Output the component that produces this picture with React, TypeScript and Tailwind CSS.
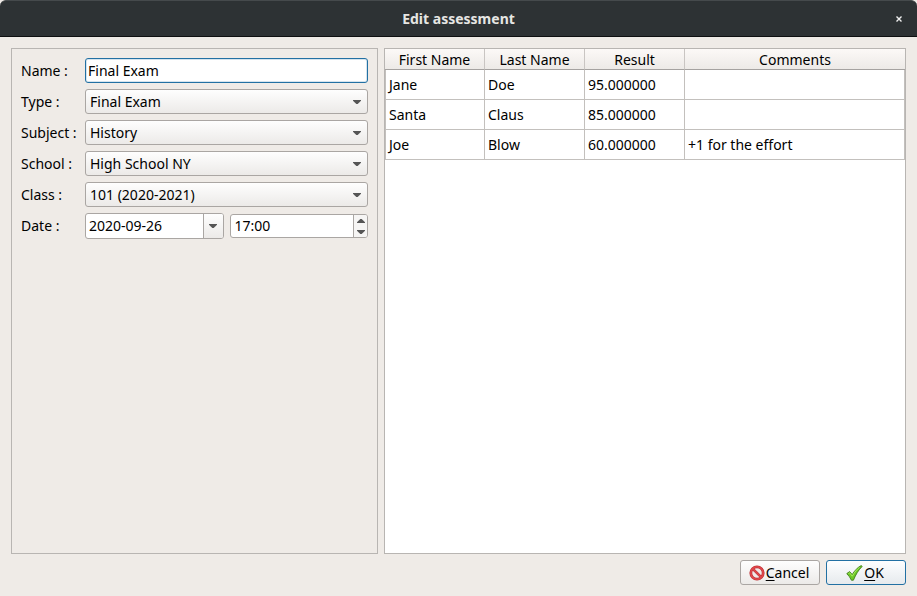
import { useState } from "react";
import type { ReactNode } from "react";

const results = [
  { first: "Jane", last: "Doe", result: "95.000000", comment: "" },
  { first: "Santa", last: "Claus", result: "85.000000", comment: "" },
  { first: "Joe", last: "Blow", result: "60.000000", comment: "+1 for the effort" },
];

const selects = [
  { id: "type", label: "Type :", options: ["Final Exam"] },
  { id: "subject", label: "Subject :", options: ["History"] },
  { id: "school", label: "School :", options: ["High School NY"] },
  { id: "class", label: "Class :", options: ["101 (2020-2021)"] },
];

function Arrow({ up = false, className = "" }: { up?: boolean; className?: string }) {
  return (
    <svg
      className={className}
      width="8"
      height="4"
      viewBox="0 0 8 4"
      fill="#555555"
      aria-hidden="true"
    >
      {up ? <path d="M3.3 0h1.4L8 3.2V4H0v-.8z" /> : <path d="M0 0h8v.8L4.7 4H3.3L0 .8z" />}
    </svg>
  );
}

function Row({ id, label, children }: { id: string; label: string; children: ReactNode }) {
  return (
    <div className="flex items-center gap-1.5">
      <label htmlFor={id} className="w-[58px] shrink-0 whitespace-nowrap">
        {label}
      </label>
      {children}
    </div>
  );
}

function Forbidden() {
  return (
    <svg width="16" height="16" viewBox="0 0 16 16" aria-hidden="true">
      <circle cx="8" cy="8" r="6.2" fill="#f0e8e8" stroke="#bd3034" strokeWidth="2.8" />
      <path d="M3.8 3.8l8.4 8.4" stroke="#bd3034" strokeWidth="2.6" />
      <circle cx="8" cy="8" r="6.2" fill="none" stroke="#e0474b" strokeWidth="1.6" />
      <path d="M3.8 3.8l8.4 8.4" stroke="#e0474b" strokeWidth="1.6" />
    </svg>
  );
}

function Check() {
  return (
    <svg width="17" height="16" viewBox="0 0 17 16" aria-hidden="true">
      <path
        d="M0.8 8.6L3.6 6.6L6.2 9.6C8.6 5.6 11.6 2.4 15.2 0.6L16.2 1.4C12.6 4.8 9.8 9.4 7.4 15.2H5.4C4.2 12.6 2.8 10.6 0.8 8.6z"
        fill="#6cc926"
        stroke="#3f7d1c"
        strokeWidth="0.9"
        strokeLinejoin="round"
      />
      <path d="M2.4 8.6L3.6 7.8L6.3 11.2C8.6 7 11 4.2 13.6 2.4" fill="none" stroke="#a6ec5c" strokeWidth="1" />
    </svg>
  );
}

export default function App() {
  const [name, setName] = useState("Final Exam");
  const [date, setDate] = useState("2020-09-26");
  const [time, setTime] = useState("17:00");

  return (
    <div className="flex h-screen flex-col bg-[#efebe7] font-['Noto_Sans',sans-serif] text-[14px] leading-5 text-black">
      <header className="grid h-[37px] shrink-0 grid-cols-[1fr_auto_1fr] items-center rounded-t-md border-t border-b border-t-[#454a4c] border-b-[#0e1011] bg-[#2d3234]">
        <h1 className="col-start-2 text-[14px] font-bold text-[#e6e6e3]">Edit assessment</h1>
        <button type="button" aria-label="Close" className="mr-3 flex size-3 items-center justify-center justify-self-end">
          <svg width="6" height="6" viewBox="0 0 6 6" aria-hidden="true">
            <path d="M0.5 0.5l5 5M5.5 0.5l-5 5" stroke="#f0f0f0" strokeWidth="1.4" />
          </svg>
        </button>
      </header>

      <form className="flex min-h-0 flex-1 flex-col gap-1.5 p-[11px]" onSubmit={(e) => e.preventDefault()}>
        <div className="flex min-h-0 flex-1 gap-1.5">
          <section className="flex w-[367px] shrink-0 flex-col gap-1.5 border border-[#b8b5b2] p-[9px]">
            <Row id="name" label="Name :">
              <input
                id="name"
                value={name}
                onChange={(e) => setName(e.target.value)}
                className="h-[25px] min-w-0 flex-1 rounded-[3px] border border-[#2270a3] bg-white px-0.5 shadow-[inset_0_0_0_1px_#d5e4ee] outline-none"
              />
            </Row>
            {selects.map((s) => (
              <Row key={s.id} id={s.id} label={s.label}>
                <div className="relative flex-1">
                  <select
                    id={s.id}
                    className="block h-[25px] w-full appearance-none rounded-[3px] border border-[#aaa6a3] bg-linear-to-b from-[#fefefe] to-[#eceae8] pr-6 pl-1 outline-none"
                  >
                    {s.options.map((o) => (
                      <option key={o}>{o}</option>
                    ))}
                  </select>
                  <Arrow className="pointer-events-none absolute top-[11px] right-[7px]" />
                </div>
              </Row>
            ))}
            <Row id="date" label="Date :">
              <div className="flex h-[26px] min-w-0 flex-1 overflow-hidden rounded-[3px] border border-[#aaa6a3] bg-white">
                <input
                  id="date"
                  value={date}
                  onChange={(e) => setDate(e.target.value)}
                  className="min-w-0 flex-1 pl-[3px] outline-none"
                />
                <button
                  type="button"
                  aria-label="Open calendar"
                  className="flex w-5 items-center justify-center border-l border-[#aaa6a3] bg-linear-to-b from-[#fefefe] to-[#eceae8]"
                >
                  <Arrow />
                </button>
              </div>
              <div className="flex h-6 min-w-0 flex-1 overflow-hidden rounded-[3px] border border-[#aaa6a3] bg-white">
                <input
                  aria-label="Time"
                  value={time}
                  onChange={(e) => setTime(e.target.value)}
                  className="min-w-0 flex-1 pl-1 outline-none"
                />
                <div className="flex w-[14px] flex-col border-l border-[#aaa6a3] bg-[#f6f5f4]">
                  <button type="button" aria-label="Later" className="flex flex-1 items-center justify-center">
                    <Arrow up />
                  </button>
                  <button type="button" aria-label="Earlier" className="flex flex-1 items-center justify-center">
                    <Arrow />
                  </button>
                </div>
              </div>
            </Row>
          </section>

          <section className="min-w-0 flex-1 overflow-auto border border-[#b8b5b2] bg-white">
            <table className="w-full table-fixed border-separate border-spacing-0">
              <thead>
                <tr className="h-[21px] bg-linear-to-b from-[#fcf9f7] to-[#ece9e6] leading-[18px]">
                  {["First Name", "Last Name", "Result"].map((h) => (
                    <th key={h} className="w-[100px] border-r border-b border-r-[#c9c5c2] border-b-[#a5a2a0] px-0 pt-0.5 pb-0 font-normal">
                      {h}
                    </th>
                  ))}
                  <th className="border-b border-[#a5a2a0] px-0 pt-0.5 pb-0 font-normal">Comments</th>
                </tr>
              </thead>
              <tbody>
                {results.map((r) => (
                  <tr key={r.first} className="h-[30px]">
                    <td className="border-r border-b border-l border-[#c3c0bd] py-0 pl-[3px]">{r.first}</td>
                    <td className="border-r border-b border-[#c3c0bd] py-0 pl-[3px]">{r.last}</td>
                    <td className="border-r border-b border-[#c3c0bd] py-0 pl-[3px]">{r.result}</td>
                    <td className="border-r border-b border-[#c3c0bd] py-0 pl-[3px]">{r.comment}</td>
                  </tr>
                ))}
              </tbody>
            </table>
          </section>
        </div>

        <div className="flex justify-end gap-1.5">
          <button
            type="button"
            className="flex h-[25px] w-20 items-center justify-center gap-px rounded-[3px] border border-[#aaa6a3] bg-linear-to-b from-[#fefefe] to-[#eceae8] pr-0.5"
          >
            <Forbidden />
            <span>
              <span className="underline underline-offset-2">C</span>ancel
            </span>
          </button>
          <button
            type="submit"
            className="flex h-[25px] w-20 items-center justify-center gap-px rounded-[3px] border border-[#2270a3] bg-linear-to-b from-[#fdfeff] to-[#e6eaed] pr-0.5"
          >
            <Check />
            <span>
              <span className="underline underline-offset-2">O</span>K
            </span>
          </button>
        </div>
      </form>
    </div>
  );
}
